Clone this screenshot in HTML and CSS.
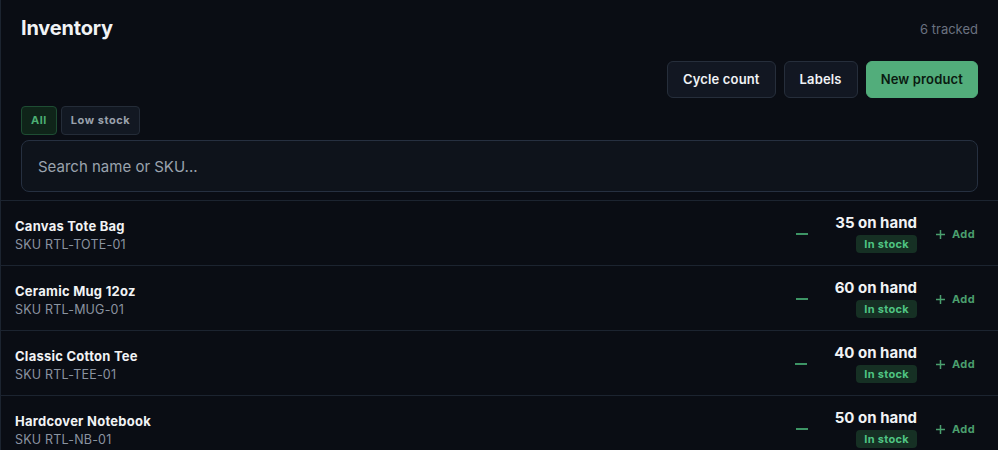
FILE: index.html
```html
<!DOCTYPE html>
<html>
<head>
    <title>Inventory</title>
    <link rel="stylesheet" href="styles.css">
</head>
<body>
    <div class="panel">
        <div class="panel-head">
            <div class="title-row">
                <h1 class="title">Inventory</h1>
                <span class="count">6 tracked</span>
            </div>

            <div class="toolbar">
                <button class="btn">Cycle count</button>
                <button class="btn">Labels</button>
                <button class="btn btn-primary">New product</button>
            </div>

            <div class="filters">
                <button class="chip chip-active">All</button>
                <button class="chip">Low stock</button>
            </div>

            <input class="search" type="text" placeholder="Search name or SKU...">
        </div>

        <ul class="items">
            <li class="item">
                <div class="item-info">
                    <div class="item-name">Canvas Tote Bag</div>
                    <div class="item-sku">SKU RTL-TOTE-01</div>
                </div>
                <div class="item-stock">
                    <button class="minus"><svg width="12" height="2" viewBox="0 0 12 2"><rect width="12" height="2" fill="currentColor"/></svg></button>
                    <div class="qty">
                        <div class="qty-num">35 on hand</div>
                        <span class="badge">In stock</span>
                    </div>
                    <button class="add"><svg width="9" height="9" viewBox="0 0 9 9"><path d="M4.5 0v9M0 4.5h9" stroke="currentColor" stroke-width="1.5"/></svg>Add</button>
                </div>
            </li>
            <li class="item">
                <div class="item-info">
                    <div class="item-name">Ceramic Mug 12oz</div>
                    <div class="item-sku">SKU RTL-MUG-01</div>
                </div>
                <div class="item-stock">
                    <button class="minus"><svg width="12" height="2" viewBox="0 0 12 2"><rect width="12" height="2" fill="currentColor"/></svg></button>
                    <div class="qty">
                        <div class="qty-num">60 on hand</div>
                        <span class="badge">In stock</span>
                    </div>
                    <button class="add"><svg width="9" height="9" viewBox="0 0 9 9"><path d="M4.5 0v9M0 4.5h9" stroke="currentColor" stroke-width="1.5"/></svg>Add</button>
                </div>
            </li>
            <li class="item">
                <div class="item-info">
                    <div class="item-name">Classic Cotton Tee</div>
                    <div class="item-sku">SKU RTL-TEE-01</div>
                </div>
                <div class="item-stock">
                    <button class="minus"><svg width="12" height="2" viewBox="0 0 12 2"><rect width="12" height="2" fill="currentColor"/></svg></button>
                    <div class="qty">
                        <div class="qty-num">40 on hand</div>
                        <span class="badge">In stock</span>
                    </div>
                    <button class="add"><svg width="9" height="9" viewBox="0 0 9 9"><path d="M4.5 0v9M0 4.5h9" stroke="currentColor" stroke-width="1.5"/></svg>Add</button>
                </div>
            </li>
            <li class="item">
                <div class="item-info">
                    <div class="item-name">Hardcover Notebook</div>
                    <div class="item-sku">SKU RTL-NB-01</div>
                </div>
                <div class="item-stock">
                    <button class="minus"><svg width="12" height="2" viewBox="0 0 12 2"><rect width="12" height="2" fill="currentColor"/></svg></button>
                    <div class="qty">
                        <div class="qty-num">50 on hand</div>
                        <span class="badge">In stock</span>
                    </div>
                    <button class="add"><svg width="9" height="9" viewBox="0 0 9 9"><path d="M4.5 0v9M0 4.5h9" stroke="currentColor" stroke-width="1.5"/></svg>Add</button>
                </div>
            </li>
        </ul>
    </div>
</body>
</html>
```

FILE: styles.css
```css
body {
    margin: 0;
    padding: 0;
    background-color: #0a0d14;
    color: #f1f3f5;
    font-family: Inter, "Noto Sans", sans-serif;
}

.panel {
    border-left: 1px solid #1c2430;
    min-height: 450px;
}

.panel-head {
    padding: 14px 20px 0 20px;
}

.title-row {
    display: flex;
    align-items: center;
    justify-content: space-between;
}

.title {
    margin: 0;
    font-size: 20px;
    line-height: 28px;
    font-weight: 700;
    letter-spacing: -0.2px;
}

.count {
    font-size: 13px;
    color: #6b7280;
    margin-top: 2px;
}

.toolbar {
    display: flex;
    justify-content: flex-end;
    gap: 8px;
    margin-top: 19px;
}

.btn {
    font-family: inherit;
    font-size: 13px;
    line-height: 17px;
    font-weight: 600;
    padding: 9px 15px;
    border-radius: 6px;
    border: 1px solid #262e3b;
    background-color: #121722;
    color: #f0f2f5;
    letter-spacing: 0.15px;
}

.btn-primary {
    background-color: #52ad7b;
    border-color: #52ad7b;
    color: #0a1a10;
    padding: 9px 14px;
}

.filters {
    display: flex;
    gap: 4px;
    margin-top: 8px;
}

.chip {
    font-family: inherit;
    font-size: 11px;
    line-height: 15px;
    font-weight: 700;
    padding: 6px 9px;
    border-radius: 4px;
    border: 1px solid #242c38;
    background-color: #121822;
    color: #9aa2ad;
    letter-spacing: 0.55px;
}

.chip-active {
    background-color: #0f2419;
    border-color: #1e4d33;
    color: #4caf73;
}

.search {
    display: block;
    box-sizing: border-box;
    width: 100%;
    margin-top: 5px;
    font-family: inherit;
    font-size: 15px;
    line-height: 20px;
    padding: 16px 16px 14px 16px;
    border-radius: 8px;
    border: 1px solid #263040;
    background-color: #0e131b;
    color: #f1f3f5;
}

.search::placeholder {
    color: #9aa3ae;
}

.items {
    list-style: none;
    margin: 8px 0 0 0;
    padding: 0;
}

.item {
    display: flex;
    align-items: center;
    justify-content: space-between;
    height: 64px;
    padding: 0 23px 0 14px;
    border-top: 1px solid #1c2430;
}

.item-info {
    padding-top: 3px;
}

.item-name {
    font-size: 13px;
    line-height: 18px;
    font-weight: 700;
    color: #f1f3f5;
    letter-spacing: 0.25px;
}

.item-sku {
    font-size: 12.5px;
    line-height: 17px;
    color: #8a93a0;
    margin-top: 1px;
    letter-spacing: 0.2px;
}

.item-stock {
    display: flex;
    align-items: center;
}

.minus {
    border: 0;
    background: none;
    padding: 6px 0;
    color: #3d9465;
    display: flex;
    margin-top: 1px;
    margin-right: 27px;
}

.qty {
    display: flex;
    flex-direction: column;
    align-items: flex-end;
}

.qty-num {
    font-size: 15px;
    line-height: 20px;
    font-weight: 700;
    color: #f1f3f5;
}

.badge {
    margin-top: 2px;
    font-size: 11px;
    line-height: 18px;
    font-weight: 700;
    padding: 0 8px;
    border-radius: 4px;
    background-color: #163024;
    color: #4fc483;
    letter-spacing: 0.3px;
}

.add {
    display: flex;
    align-items: center;
    gap: 7px;
    margin-left: 19px;
    margin-top: 2px;
    border: 0;
    background: none;
    padding: 0;
    font-family: inherit;
    font-size: 11px;
    font-weight: 700;
    color: #4a9f6e;
    letter-spacing: 0.4px;
}
```
